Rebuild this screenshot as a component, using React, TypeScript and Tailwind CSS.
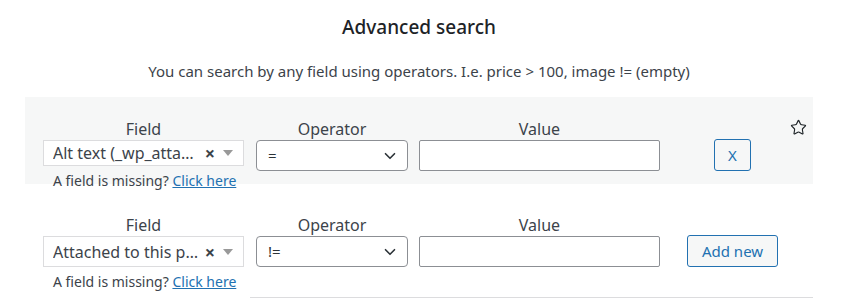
import React from 'react';
import { Star, ChevronDown } from 'lucide-react';

const font = { fontFamily: '"Noto Sans", Roboto, sans-serif' };

interface RowProps {
  field: string;
  operator: string;
  shaded?: boolean;
}

const FieldRow: React.FC<RowProps> = ({ field, operator, shaded }) => {
  return (
    <div className={`${shaded ? 'bg-[#f6f7f7] h-[87px] pt-[21px]' : 'h-[113px] pt-[30px]'} pl-[18px] flex`}>
      {/* Field */}
      <div className="w-[201px] flex flex-col items-center">
        <div className="text-[16px] leading-[22px] text-[#3c434a]">Field</div>
        <div className="w-full h-[31px] bg-white border border-[#dcdcde] flex items-center pl-[9px] pr-[10px]">
          <span className="flex-1 min-w-0 truncate text-[16px] text-[#3c434a] pr-[4px]">{field}</span>
          <span className="text-[18px] font-bold text-[#3c434a] leading-none">×</span>
          <span className="ml-[8px] w-0 h-0 border-l-[5px] border-r-[5px] border-t-[6px] border-l-transparent border-r-transparent border-t-[#999]" />
        </div>
        <div className="self-start pl-[10px] mt-[6px] text-[14px] leading-[18px] text-[#3c434a] whitespace-nowrap">
          A field is missing? <a className="text-[#2271b1] underline">Click here</a>
        </div>
      </div>
      {/* Operator */}
      <div className="w-[152px] ml-[12px] flex flex-col items-center">
        <div className="text-[16px] leading-[22px] text-[#3c434a]">Operator</div>
        <div className="w-full h-[31px] bg-white border border-[#8c8f94] rounded-[4px] flex items-center pl-[11px] pr-[8px]">
          <span className="flex-1 text-[15px] text-[#2c3338]">{operator}</span>
          <ChevronDown size={18} strokeWidth={2.2} className="text-[#2c3338]" />
        </div>
      </div>
      {/* Value */}
      <div className="w-[241px] ml-[11px] flex flex-col items-center">
        <div className="text-[16px] leading-[22px] text-[#3c434a]">Value</div>
        <div className="w-full h-[31px] bg-white border border-[#8c8f94] rounded-[2px]" />
      </div>
      {/* Actions */}
      <div className="w-[121px] ml-[12px] flex justify-center pt-[21px]">
        {shaded ? (
          <button className="w-[37px] h-[32px] rounded-[3px] border border-[#2271b1] bg-[#f6f7f7] text-[#2271b1] text-[15px]">X</button>
        ) : (
          <button className="w-[91px] h-[32px] rounded-[3px] border border-[#2271b1] bg-[#f6f7f7] text-[#2271b1] text-[15px]">Add new</button>
        )}
      </div>
      {shaded && (
        <div className="-ml-[3px] mt-[1px]">
          <Star size={17} strokeWidth={1.6} className="text-[#1d2327]" />
        </div>
      )}
    </div>
  );
};

export default function App() {
  return (
    <div className="w-[853px] h-[307px] bg-white overflow-hidden" style={font}>
      <div className="ml-[25px] w-[788px]">
        <h2 className="pt-[14px] text-center text-[19px] leading-[26px] font-medium text-[#1d2327]">Advanced search</h2>
        <p className="mt-[21px] text-center text-[15px] leading-[20px] text-[#3c434a]">
          You can search by any field using operators. I.e. price &gt; 100, image != (empty)
        </p>
        <div className="mt-[16px]">
          <FieldRow field="Alt text (_wp_attachment_image_alt)" operator="=" shaded />
          <FieldRow field="Attached to this post (post_parent)" operator="!=" />
          <div className="ml-[225px] border-t border-[#dcdcde]" />
        </div>
      </div>
    </div>
  );
}
